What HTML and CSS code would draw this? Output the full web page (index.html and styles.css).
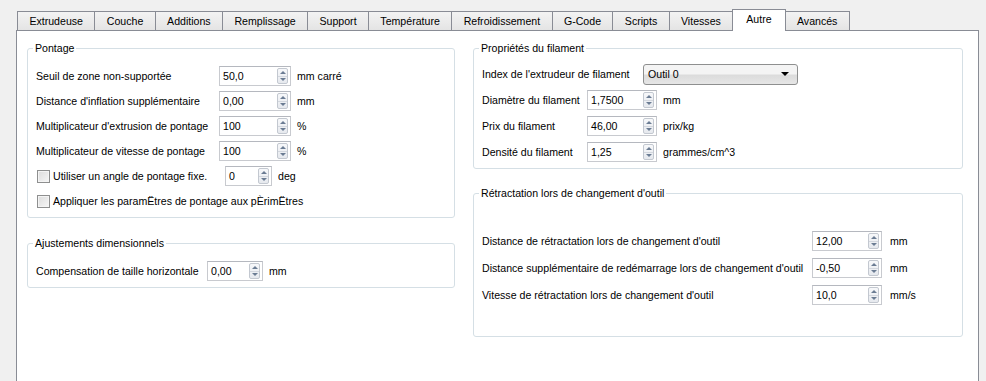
FILE: index.html
```html
<!DOCTYPE html>
<html lang="fr">
<head>
    <meta charset="UTF-8">
    <title>Autre</title>
    <link rel="stylesheet" href="styles.css">
</head>
<body>

<div class="tabs">
    <div class="tab">Extrudeuse</div>
    <div class="tab">Couche</div>
    <div class="tab">Additions</div>
    <div class="tab">Remplissage</div>
    <div class="tab">Support</div>
    <div class="tab">Température</div>
    <div class="tab">Refroidissement</div>
    <div class="tab">G-Code</div>
    <div class="tab">Scripts</div>
    <div class="tab">Vitesses</div>
    <div class="tab active">Autre</div>
    <div class="tab">Avancés</div>
</div>

<div class="panel">
    <!-- left column -->
    <div class="col col-left">
        <fieldset class="group pontage">
            <legend>Pontage</legend>
            <div class="rows">
                <div class="row">
                    <span class="lbl lbl-pontage">Seuil de zone non-supportée</span>
                    <span class="spin spin-72"><span class="val">50,0</span><span class="arrows"><i class="up"></i><i class="down"></i></span></span>
                    <span class="unit">mm carré</span>
                </div>
                <div class="row">
                    <span class="lbl lbl-pontage">Distance d'inflation supplémentaire</span>
                    <span class="spin spin-72"><span class="val">0,00</span><span class="arrows"><i class="up"></i><i class="down"></i></span></span>
                    <span class="unit">mm</span>
                </div>
                <div class="row">
                    <span class="lbl lbl-pontage">Multiplicateur d'extrusion de pontage</span>
                    <span class="spin spin-72"><span class="val">100</span><span class="arrows"><i class="up"></i><i class="down"></i></span></span>
                    <span class="unit">%</span>
                </div>
                <div class="row">
                    <span class="lbl lbl-pontage">Multiplicateur de vitesse de pontage</span>
                    <span class="spin spin-72"><span class="val">100</span><span class="arrows"><i class="up"></i><i class="down"></i></span></span>
                    <span class="unit">%</span>
                </div>
                <div class="row">
                    <span class="check"></span>
                    <span class="lbl lbl-angle">Utiliser un angle de pontage fixe.</span>
                    <span class="spin spin-47"><span class="val">0</span><span class="arrows"><i class="up"></i><i class="down"></i></span></span>
                    <span class="unit">deg</span>
                </div>
                <div class="row">
                    <span class="check"></span>
                    <span class="lbl">Appliquer les paramËtres de pontage aux pÈrimËtres</span>
                </div>
            </div>
        </fieldset>

        <fieldset class="group ajust">
            <legend>Ajustements dimensionnels</legend>
            <div class="rows">
                <div class="row">
                    <span class="lbl lbl-ajust">Compensation de taille horizontale</span>
                    <span class="spin spin-56"><span class="val">0,00</span><span class="arrows"><i class="up"></i><i class="down"></i></span></span>
                    <span class="unit">mm</span>
                </div>
            </div>
        </fieldset>
    </div>

    <!-- right column -->
    <div class="col col-right">
        <fieldset class="group filament">
            <legend>Propriétés du filament</legend>
            <div class="rows">
                <div class="row">
                    <span class="lbl lbl-combo">Index de l'extrudeur de filament</span>
                    <span class="combo"><span class="val">Outil 0</span><span class="caret"></span></span>
                </div>
                <div class="row">
                    <span class="lbl lbl-filament">Diamètre du filament</span>
                    <span class="spin spin-70"><span class="val">1,7500</span><span class="arrows"><i class="up"></i><i class="down"></i></span></span>
                    <span class="unit">mm</span>
                </div>
                <div class="row">
                    <span class="lbl lbl-filament">Prix du filament</span>
                    <span class="spin spin-70"><span class="val">46,00</span><span class="arrows"><i class="up"></i><i class="down"></i></span></span>
                    <span class="unit">prix/kg</span>
                </div>
                <div class="row">
                    <span class="lbl lbl-filament">Densité du filament</span>
                    <span class="spin spin-70"><span class="val">1,25</span><span class="arrows"><i class="up"></i><i class="down"></i></span></span>
                    <span class="unit">grammes/cm^3</span>
                </div>
            </div>
        </fieldset>

        <fieldset class="group retract">
            <legend>Rétractation lors de changement d'outil</legend>
            <div class="rows">
                <div class="row">
                    <span class="lbl lbl-retract">Distance de rétractation lors de changement d'outil</span>
                    <span class="spin spin-70"><span class="val">12,00</span><span class="arrows"><i class="up"></i><i class="down"></i></span></span>
                    <span class="unit unit-wide">mm</span>
                </div>
                <div class="row">
                    <span class="lbl lbl-retract">Distance supplémentaire de redémarrage lors de changement d'outil</span>
                    <span class="spin spin-70"><span class="val">-0,50</span><span class="arrows"><i class="up"></i><i class="down"></i></span></span>
                    <span class="unit unit-wide">mm</span>
                </div>
                <div class="row">
                    <span class="lbl lbl-retract">Vitesse de rétractation lors de changement d'outil</span>
                    <span class="spin spin-70"><span class="val">10,0</span><span class="arrows"><i class="up"></i><i class="down"></i></span></span>
                    <span class="unit unit-wide">mm/s</span>
                </div>
            </div>
        </fieldset>
    </div>
</div>

</body>
</html>
```

FILE: styles.css
```css
body {
    margin: 0;
    padding: 10px 0 0 16px;
    background: #f0f0f0;
    font-family: 'Liberation Sans', Arial, sans-serif;
    font-size: 10.6px;
    color: #000;
    overflow: hidden;
}

/* tab bar */
.tabs {
    display: flex;
    align-items: flex-end;
    height: 20px;
    padding-left: 2px;
}
.tab {
    height: 18px;
    line-height: 18px;
    padding: 0 11.4px;
    margin-left: -1px;
    border: 1px solid #898c95;
    border-bottom: none;
    background: linear-gradient(#f3f3f3, #e4e4e4);
    white-space: nowrap;
}
.tab.active {
    height: 21px;
    line-height: 19px;
    margin-bottom: -1px;
    padding: 0 13px;
    background: #fff;
    position: relative;
    z-index: 1;
}

/* page */
.panel {
    display: flex;
    gap: 18px;
    width: 938px;
    height: 340px;
    padding: 10px 13px 0 10px;
    border: 1px solid #898c95;
    border-bottom: none;
    background: #fff;
}
.col {
    display: flex;
    flex-direction: column;
}
.col-left {
    width: 428px;
    gap: 18px;
}
.col-right {
    width: 490px;
    gap: 17px;
}

/* group boxes */
.group {
    margin: 0;
    padding: 0 8px 6px;
    border: 1px solid #d5dfe5;
    border-radius: 3px;
    min-width: 0;
}
.group legend {
    margin-left: -3px;
    padding: 0 2px;
    line-height: 14px;
}
.rows {
    display: flex;
    flex-direction: column;
    gap: 5px;
    padding-top: 11px;
}
.filament .rows {
    gap: 6px;
    padding-top: 9px;
}
.retract .rows {
    gap: 7px;
    padding-top: 31px;
}
.retract {
    padding-bottom: 31px;
}

.row {
    display: flex;
    align-items: center;
    height: 20px;
    white-space: nowrap;
}
.lbl-pontage { width: 183px; }
.lbl-angle { width: 172px; }
.lbl-ajust { width: 171px; }
.lbl-combo { width: 161px; }
.lbl-filament { width: 105px; }
.lbl-retract { width: 330px; }

.unit {
    margin-left: 6px;
}
.unit-wide {
    margin-left: 8px;
}

/* spin boxes */
.spin {
    display: flex;
    align-items: center;
    justify-content: space-between;
    box-sizing: border-box;
    height: 20px;
    padding: 0 2px 0 3px;
    border: 1px solid #c8cacf;
    border-top-color: #b5b8bf;
    background: #fff;
}
.spin-72 { width: 72px; }
.spin-70 { width: 70px; }
.spin-56 { width: 56px; }
.spin-47 { width: 47px; }

.arrows {
    display: flex;
    flex-direction: column;
    width: 11px;
    height: 16px;
    box-sizing: border-box;
    border: 1px solid #c3c8d0;
    border-radius: 2px;
    background: linear-gradient(#f7f8fa, #e6e9ee);
}
.arrows i {
    flex: 1;
    display: flex;
    align-items: center;
    justify-content: center;
}
.arrows i::after {
    content: "";
    border-left: 3px solid transparent;
    border-right: 3px solid transparent;
}
.arrows .up {
    border-bottom: 1px solid #d3d7de;
}
.arrows .up::after {
    border-bottom: 3px solid #6b7c93;
}
.arrows .down::after {
    border-top: 3px solid #6b7c93;
}

/* combo box */
.combo {
    display: flex;
    align-items: center;
    justify-content: space-between;
    box-sizing: border-box;
    width: 155px;
    height: 21px;
    padding: 0 8px 0 4px;
    border: 1px solid #8e8f8f;
    border-radius: 3px;
    background: linear-gradient(#f4f4f4 45%, #dcdcdc 55%, #e6e6e6);
}
.caret {
    border-left: 4px solid transparent;
    border-right: 4px solid transparent;
    border-top: 4px solid #000;
}

/* check boxes */
.check {
    box-sizing: border-box;
    width: 13px;
    height: 13px;
    margin: 0 3px 0 1px;
    border: 1px solid #8e8f8f;
    background: linear-gradient(135deg, #dcdcdc, #f6f6f6);
    box-shadow: inset 0 0 0 1px #f4f4f4;
}
```
